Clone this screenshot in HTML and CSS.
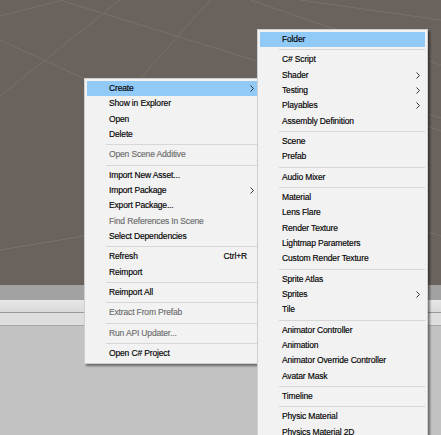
FILE: index.html
```html
<!DOCTYPE html>
<html>
<head>
<meta charset="utf-8">
<link rel="stylesheet" href="styles.css">
</head>
<body>
<div class="screen">
  <div class="scene">
    <svg class="grid" width="441" height="285" viewBox="0 0 441 285">
      <g stroke="#78716b" stroke-width="1" fill="none">
        <line x1="63" y1="0" x2="0" y2="16"/>
        <line x1="0" y1="40" x2="120" y2="95"/>
        <line x1="60" y1="0" x2="441" y2="118"/>
        <line x1="120" y1="0" x2="0" y2="96"/>
        <line x1="210" y1="0" x2="130" y2="90"/>
        <line x1="300" y1="0" x2="441" y2="20"/>
        <line x1="250" y1="0" x2="441" y2="65"/>
        <line x1="300" y1="80" x2="441" y2="131"/>
        <line x1="330" y1="200" x2="441" y2="236"/>
        <line x1="0" y1="250" x2="84" y2="236"/>
      </g>
    </svg>
  </div>
  <div class="band band-dark"></div>
  <div class="band band-tab"></div>
  <div class="band band-row"></div>
  <div class="panel"></div>

  <div class="menu menu-main">
    <div class="item active"><span class="label">Create</span><span class="arrow"><svg width="4" height="7" viewBox="0 0 4 7"><polyline points="0.5,0.5 3.5,3.5 0.5,6.5"/></svg></span></div>
    <div class="item"><span class="label">Show in Explorer</span></div>
    <div class="item"><span class="label">Open</span></div>
    <div class="item"><span class="label">Delete</span></div>
    <div class="sep"></div>
    <div class="item disabled"><span class="label">Open Scene Additive</span></div>
    <div class="sep"></div>
    <div class="item"><span class="label">Import New Asset...</span></div>
    <div class="item"><span class="label">Import Package</span><span class="arrow"><svg width="4" height="7" viewBox="0 0 4 7"><polyline points="0.5,0.5 3.5,3.5 0.5,6.5"/></svg></span></div>
    <div class="item"><span class="label">Export Package...</span></div>
    <div class="item disabled"><span class="label">Find References In Scene</span></div>
    <div class="item"><span class="label">Select Dependencies</span></div>
    <div class="sep"></div>
    <div class="item"><span class="label">Refresh</span><span class="key">Ctrl+R</span></div>
    <div class="item"><span class="label">Reimport</span></div>
    <div class="sep"></div>
    <div class="item"><span class="label">Reimport All</span></div>
    <div class="sep"></div>
    <div class="item disabled"><span class="label">Extract From Prefab</span></div>
    <div class="sep"></div>
    <div class="item disabled"><span class="label">Run API Updater...</span></div>
    <div class="sep"></div>
    <div class="item"><span class="label">Open C# Project</span></div>
  </div>

  <div class="menu menu-sub">
    <div class="item active"><span class="label">Folder</span></div>
    <div class="sep"></div>
    <div class="item"><span class="label">C# Script</span></div>
    <div class="item"><span class="label">Shader</span><span class="arrow"><svg width="4" height="7" viewBox="0 0 4 7"><polyline points="0.5,0.5 3.5,3.5 0.5,6.5"/></svg></span></div>
    <div class="item"><span class="label">Testing</span><span class="arrow"><svg width="4" height="7" viewBox="0 0 4 7"><polyline points="0.5,0.5 3.5,3.5 0.5,6.5"/></svg></span></div>
    <div class="item"><span class="label">Playables</span><span class="arrow"><svg width="4" height="7" viewBox="0 0 4 7"><polyline points="0.5,0.5 3.5,3.5 0.5,6.5"/></svg></span></div>
    <div class="item"><span class="label">Assembly Definition</span></div>
    <div class="sep"></div>
    <div class="item"><span class="label">Scene</span></div>
    <div class="item"><span class="label">Prefab</span></div>
    <div class="sep"></div>
    <div class="item"><span class="label">Audio Mixer</span></div>
    <div class="sep"></div>
    <div class="item"><span class="label">Material</span></div>
    <div class="item"><span class="label">Lens Flare</span></div>
    <div class="item"><span class="label">Render Texture</span></div>
    <div class="item"><span class="label">Lightmap Parameters</span></div>
    <div class="item"><span class="label">Custom Render Texture</span></div>
    <div class="sep"></div>
    <div class="item"><span class="label">Sprite Atlas</span></div>
    <div class="item"><span class="label">Sprites</span><span class="arrow"><svg width="4" height="7" viewBox="0 0 4 7"><polyline points="0.5,0.5 3.5,3.5 0.5,6.5"/></svg></span></div>
    <div class="item"><span class="label">Tile</span></div>
    <div class="sep"></div>
    <div class="item"><span class="label">Animator Controller</span></div>
    <div class="item"><span class="label">Animation</span></div>
    <div class="item"><span class="label">Animator Override Controller</span></div>
    <div class="item"><span class="label">Avatar Mask</span></div>
    <div class="sep"></div>
    <div class="item"><span class="label">Timeline</span></div>
    <div class="sep"></div>
    <div class="item"><span class="label">Physic Material</span></div>
    <div class="item"><span class="label">Physics Material 2D</span></div>
  </div>
</div>
</body>
</html>
```

FILE: styles.css
```css
* { box-sizing: border-box; }
html, body { margin: 0; padding: 0; }
body {
  width: 441px;
  height: 435px;
  overflow: hidden;
  font-family: "Liberation Sans", Arial, sans-serif;
  font-size: 8.5px;
  letter-spacing: -0.15px;
  color: #000;
  -webkit-text-stroke: 0.15px currentColor;
}
.screen {
  position: relative;
  width: 441px;
  height: 435px;
  overflow: hidden;
  display: flex;
  flex-direction: column;
}
.scene {
  height: 285px;
  flex: none;
  background: #6a625c;
}
.grid { display: block; }
.band { flex: none; }
.band-dark {
  height: 15px;
  background: #a2a2a2;
}
.band-tab {
  height: 13px;
  background: linear-gradient(#e6e6e6, #d9d9d9);
  border-bottom: 1px solid #999999;
}
.band-row {
  height: 13px;
  background: #dedede;
  border-bottom: 1px solid #a8a8a8;
}
.panel {
  flex: 1;
  background: #c2c2c2;
}

.menu {
  position: absolute;
  background: #f2f2f2;
  border: 1px solid #cfcfcf;
  padding: 2px;
  box-shadow: 2px 2px 2px rgba(0, 0, 0, 0.45);
}
.menu-main {
  left: 84px;
  top: 78px;
  width: 178px;
}
.menu-sub {
  left: 257px;
  top: 29px;
  width: 171px;
}
.item {
  display: flex;
  align-items: center;
  height: 15.33px;
  line-height: 15.33px;
  padding-left: 22px;
  white-space: nowrap;
}
.item.active { background: #91c9f7; }
.item.disabled { color: #6d6d6d; }
.label { flex: 1; }
.key { margin-right: 12px; }
.arrow {
  flex: none;
  width: 14px;
  display: flex;
  justify-content: center;
  align-items: center;
}
.arrow svg { display: block; }
.arrow polyline { fill: none; stroke: #333; stroke-width: 1; }
.sep {
  height: 5px;
  display: flex;
  align-items: center;
  padding-left: 19px;
}
.sep::after {
  content: "";
  flex: 1;
  height: 1px;
  background: #d7d7d7;
}
```
